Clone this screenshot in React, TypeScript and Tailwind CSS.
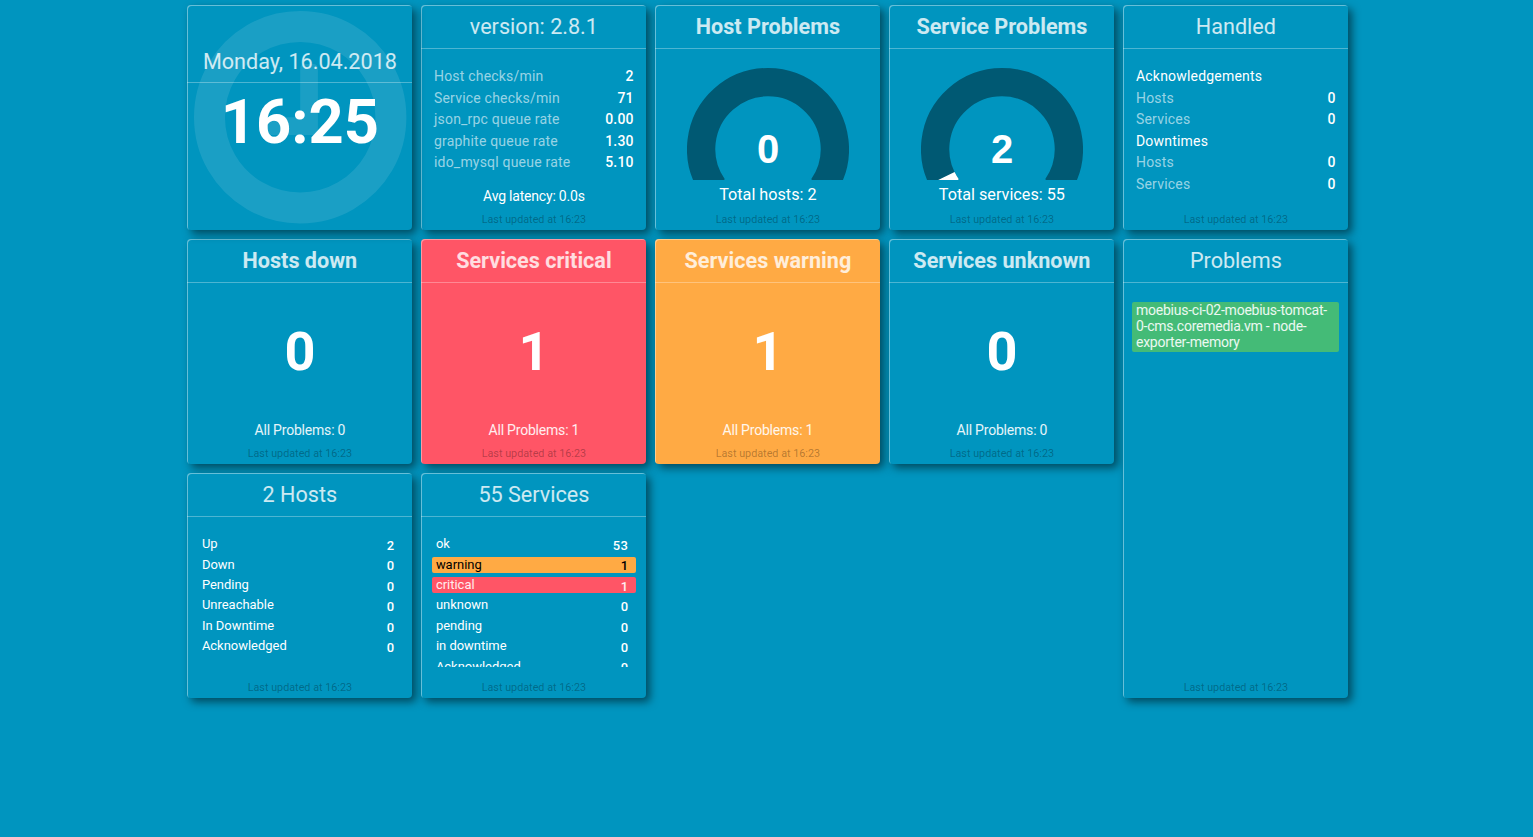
import type { ReactNode } from "react";

type CardProps = {
  title: string;
  bold?: boolean;
  tone?: string;
  className?: string;
  children?: ReactNode;
};

const FRAME =
  "rounded-[4px] shadow-[inset_1px_1px_0_rgba(255,255,255,0.4),4px_4px_8px_rgba(0,0,0,0.5)]";

function Card({ title, bold, tone = "bg-[#0095bf]", className = "", children }: CardProps) {
  return (
    <section className={`flex flex-col overflow-hidden ${FRAME} ${tone} ${className}`}>
      <h1
        className={`h-[44px] shrink-0 border-b border-white/30 text-center text-[21.6px] leading-[43px] whitespace-nowrap text-white/80 ${bold ? "font-bold" : "font-normal"}`}
      >
        {title}
      </h1>
      <div className="flex min-h-0 flex-1 flex-col">{children}</div>
      <p className="h-[21px] shrink-0 text-center text-[10.8px] leading-[21px] text-black/30">
        Last updated at 16:23
      </p>
    </section>
  );
}

type Row = { label: string; value?: string };

function StatList({ rows }: { rows: Row[] }) {
  return (
    <ul className="mt-[17px] pr-[12.7px] pl-[12.6px] text-[14px] leading-[21.6px] tracking-[0.2px]">
      {rows.map((row, i) => (
        <li key={i} className="flex justify-between">
          <span className={row.value === undefined ? "text-white" : "text-white/60"}>{row.label}</span>
          {row.value !== undefined && <span className="font-medium text-white">{row.value}</span>}
        </li>
      ))}
    </ul>
  );
}

type StateRow = { label: string; value: string; tone?: string };

function StateTable({ rows }: { rows: StateRow[] }) {
  return (
    <div className="mt-[19px] h-[131px] overflow-hidden pt-[0.2px] pr-[10px] pl-[11px]">
      {rows.map((row) => (
        <div
          key={row.label}
          className={`mb-[4px] flex h-[16.4px] justify-between rounded-[2px] pr-[8px] pl-[3.5px] text-[12.96px] leading-[16px] ${row.tone ?? "text-white"}`}
        >
          <span>{row.label}</span>
          <span className="pt-[1.8px] font-medium tracking-[0.4px]">{row.value}</span>
        </div>
      ))}
    </div>
  );
}

function arc(from: number, to: number) {
  const point = (deg: number) => {
    const a = (deg * Math.PI) / 180;
    return `${81 + 66.85 * Math.sin(a)} ${81 - 66.85 * Math.cos(a)}`;
  };
  return `M${point(from)}A66.85 66.85 0 ${to - from > 180 ? 1 : 0} 1 ${point(to)}`;
}

function Gauge({ value, max, caption }: { value: number; max: number; caption: string }) {
  return (
    <>
      <svg className="mt-[19px] ml-[31.6px] block" width="162" height="112" viewBox="0 0 162 112" fill="none" strokeWidth="28.3">
        <path d={arc(-125, 125)} stroke="#005973" />
        {value > 0 && <path d={arc(-125, -125 + (250 * value) / max)} stroke="#fff" />}
        <text x="81" y="95" textAnchor="middle" fill="#fff" className="font-['Liberation_Sans',sans-serif] text-[40px] font-bold">
          {value}
        </text>
      </svg>
      <p className="text-center text-[16.2px] leading-[29px] text-white">{caption}</p>
    </>
  );
}

function Count({ value }: { value: number }) {
  return (
    <>
      <p className="mt-[36px] text-center text-[54px] leading-[65px] font-bold text-white">{value}</p>
      <p className="mt-[36px] text-center text-[14px] leading-[20px] tracking-[-0.2px] text-white/90">All Problems: {value}</p>
    </>
  );
}

function Clock() {
  return (
    <section className={`relative flex flex-col overflow-hidden bg-[#0095bf] text-center ${FRAME}`}>
      <svg
        className="absolute top-[6.4px] left-[7px] h-[212.4px] w-[212.4px]"
        viewBox="0 128 1536 1536"
        fill="#fff"
        fillOpacity="0.1"
      >
        <path d="M896 544v448q0 14-9 23t-23 9h-320q-14 0-23-9t-9-23v-64q0-14 9-23t23-9h224v-352q0-14 9-23t23-9h64q14 0 23 9t9 23zm416 352q0-148-73-273t-198-198-273-73-273 73-198 198-73 273 73 273 198 198 273 73 273-73 198-198 73-273zm224 0q0 209-103 385.500t-279.500 279.500-385.500 103-385.500-103-279.500-279.500-103-385.500 103-385.500 279.500-279.500 385.500-103 385.500 103 279.500 279.500 103 385.500z" />
      </svg>
      <h1 className="mt-[34px] h-[44px] border-b border-white/30 text-[21.6px] leading-[45px] whitespace-nowrap text-white/80">
        Monday, 16.04.2018
      </h1>
      <p className="text-[61.4px] leading-[79px] font-bold text-white">16:25</p>
    </section>
  );
}

export default function App() {
  return (
    <main className="min-h-screen bg-[#0095bf] pt-[5px] pl-[187.4px] font-[Roboto,sans-serif]">
      <div className="grid auto-rows-[225px] grid-cols-[repeat(5,225px)] gap-[9px]">
        <Clock />
        <Card title="version: 2.8.1">
          <StatList
            rows={[
              { label: "Host checks/min", value: "2" },
              { label: "Service checks/min", value: "71" },
              { label: "json_rpc queue rate", value: "0.00" },
              { label: "graphite queue rate", value: "1.30" },
              { label: "ido_mysql queue rate", value: "5.10" },
            ]}
          />
          <p className="mt-[12px] text-center text-[14px] leading-[20px] tracking-[-0.2px] text-white">Avg latency: 0.0s</p>
        </Card>
        <Card title="Host Problems" bold>
          <Gauge value={0} max={2} caption="Total hosts: 2" />
        </Card>
        <Card title="Service Problems" bold>
          <Gauge value={2} max={55} caption="Total services: 55" />
        </Card>
        <Card title="Handled">
          <StatList
            rows={[
              { label: "Acknowledgements" },
              { label: "Hosts", value: "0" },
              { label: "Services", value: "0" },
              { label: "Downtimes" },
              { label: "Hosts", value: "0" },
              { label: "Services", value: "0" },
            ]}
          />
        </Card>

        <Card title="Hosts down" bold>
          <Count value={0} />
        </Card>
        <Card title="Services critical" bold tone="bg-[#ff5566]">
          <Count value={1} />
        </Card>
        <Card title="Services warning" bold tone="bg-[#ffaa44]">
          <Count value={1} />
        </Card>
        <Card title="Services unknown" bold>
          <Count value={0} />
        </Card>
        <Card title="Problems" className="row-span-2">
          <p className="mt-[19px] mr-[9px] ml-[9px] h-[50px] rounded-[2px] bg-[#44bb77] pl-[3.6px] text-[14px] leading-[16px] tracking-[-0.24px] text-white/90">
            moebius-ci-02-moebius-tomcat-
            <br />
            0-cms.coremedia.vm - node-
            <br />
            exporter-memory
          </p>
        </Card>

        <Card title="2 Hosts">
          <StateTable
            rows={[
              { label: "Up", value: "2" },
              { label: "Down", value: "0" },
              { label: "Pending", value: "0" },
              { label: "Unreachable", value: "0" },
              { label: "In Downtime", value: "0" },
              { label: "Acknowledged", value: "0" },
            ]}
          />
        </Card>
        <Card title="55 Services">
          <StateTable
            rows={[
              { label: "ok", value: "53" },
              { label: "warning", value: "1", tone: "bg-[#ffaa44] text-black" },
              { label: "critical", value: "1", tone: "bg-[#ff5566] text-white/90" },
              { label: "unknown", value: "0" },
              { label: "pending", value: "0" },
              { label: "in downtime", value: "0" },
              { label: "Acknowledged", value: "0" },
            ]}
          />
        </Card>
      </div>
    </main>
  );
}
